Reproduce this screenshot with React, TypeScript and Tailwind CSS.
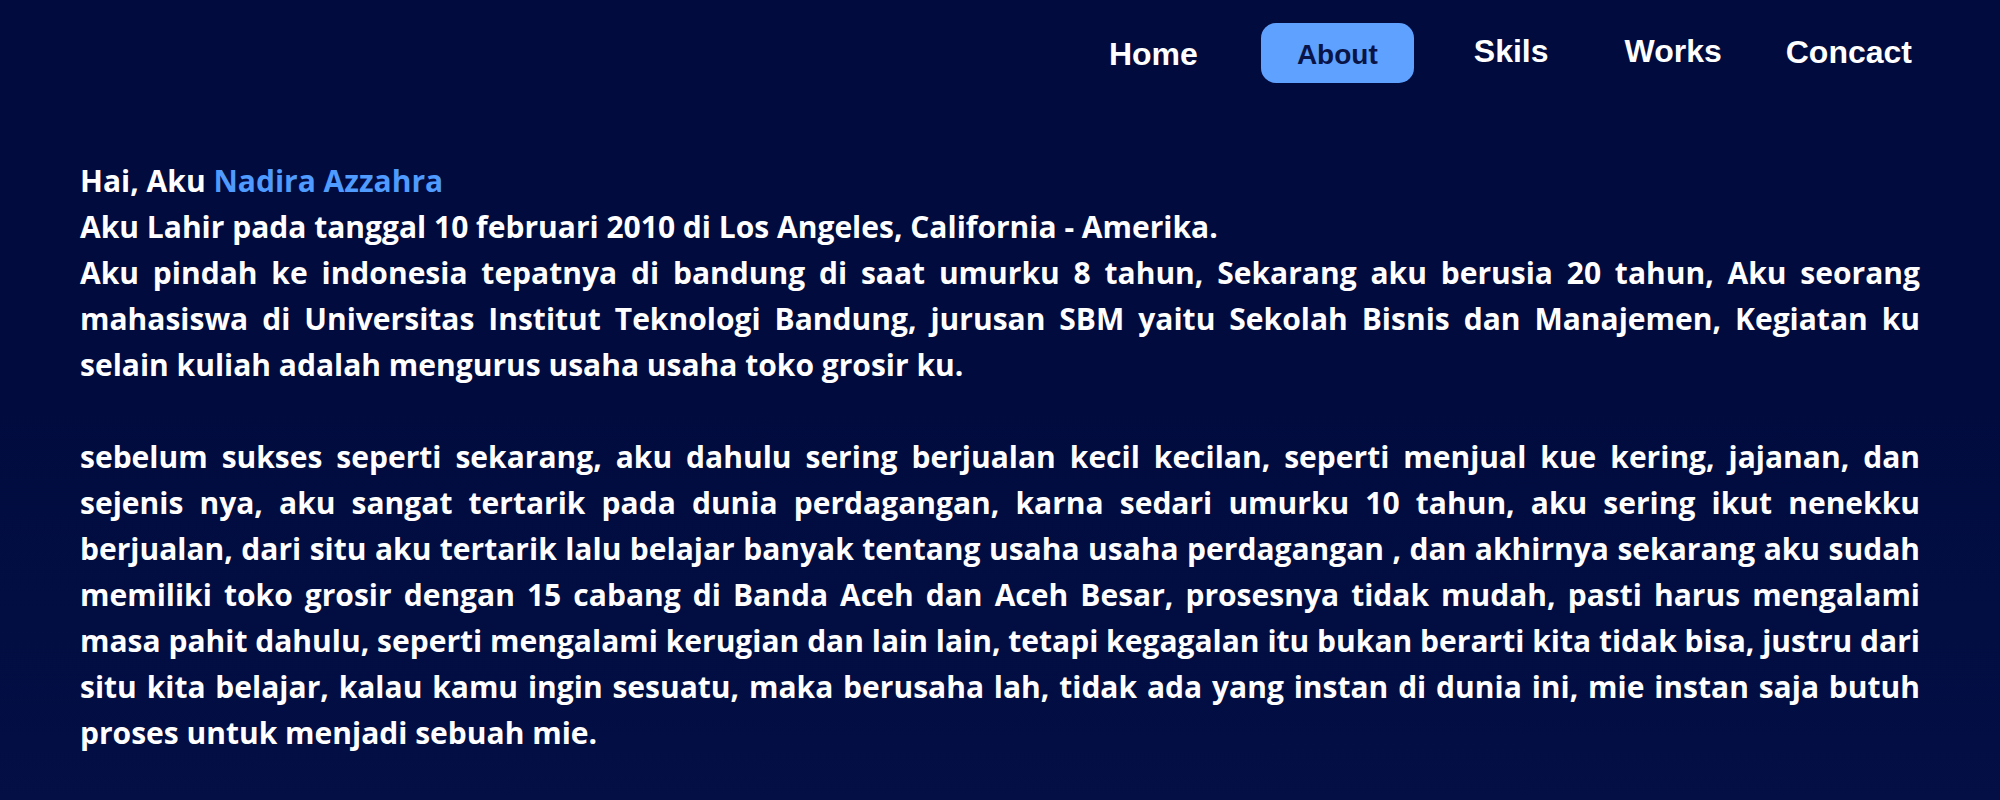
import React from "react";

const navFont = { fontFamily: '"Liberation Sans", Arial, sans-serif' };

export default function App() {
  return (
    <div className="min-h-screen w-full bg-gradient-to-b from-[#010b3e] via-[#010b3e] to-[#030f45]">
      <header className="flex items-start justify-end pt-[23px] pr-[88px] h-[110px]" style={navFont}>
        <a className="mt-[15px] text-[32px] leading-[32px] font-bold text-white">Home</a>
        <a className="ml-[63px] flex h-[60px] w-[153px] items-center justify-center rounded-[15px] bg-[#5ea1ff] pt-[3px] text-[28px] font-bold text-[#0a1447]">
          About
        </a>
        <a className="ml-[60px] mt-[12px] text-[32px] leading-[32px] font-bold text-white">Skils</a>
        <a className="ml-[76px] mt-[12px] text-[32px] leading-[32px] font-bold text-white">Works</a>
        <a className="ml-[64px] mt-[13px] text-[32px] leading-[32px] font-bold text-white">Concact</a>
      </header>
      <main className="px-[80px] pt-[48px] pb-[40px]">
        <p
          className="text-justify text-[30px] leading-[46px] font-bold text-white"
          style={{ fontFamily: '"Open Sans", "Noto Sans", sans-serif' }}
        >
          Hai, Aku <span className="text-[#4f9bff]">Nadira Azzahra</span>
          <br />
          Aku Lahir pada tanggal 10 februari 2010 di Los Angeles, California - Amerika.
          <br />
          Aku pindah ke indonesia tepatnya di bandung di saat umurku 8 tahun, Sekarang aku berusia 20 tahun, Aku seorang
          mahasiswa di Universitas Institut Teknologi Bandung, jurusan SBM yaitu Sekolah Bisnis dan Manajemen, Kegiatan ku
          selain kuliah adalah mengurus usaha usaha toko grosir ku.
          <br />
          <br />
          sebelum sukses seperti sekarang, aku dahulu sering berjualan kecil kecilan, seperti menjual kue kering, jajanan,
          dan sejenis nya, aku sangat tertarik pada dunia perdagangan, karna sedari umurku 10 tahun, aku sering ikut
          nenekku berjualan, dari situ aku tertarik lalu belajar banyak tentang usaha usaha perdagangan , dan akhirnya
          sekarang aku sudah memiliki toko grosir dengan 15 cabang di Banda Aceh dan Aceh Besar, prosesnya tidak mudah,
          pasti harus mengalami masa pahit dahulu, seperti mengalami kerugian dan lain lain, tetapi kegagalan itu bukan
          berarti kita tidak bisa, justru dari situ kita belajar, kalau kamu ingin sesuatu, maka berusaha lah, tidak ada
          yang instan di dunia ini, mie instan saja butuh proses untuk menjadi sebuah mie.
        </p>
      </main>
    </div>
  );
}
